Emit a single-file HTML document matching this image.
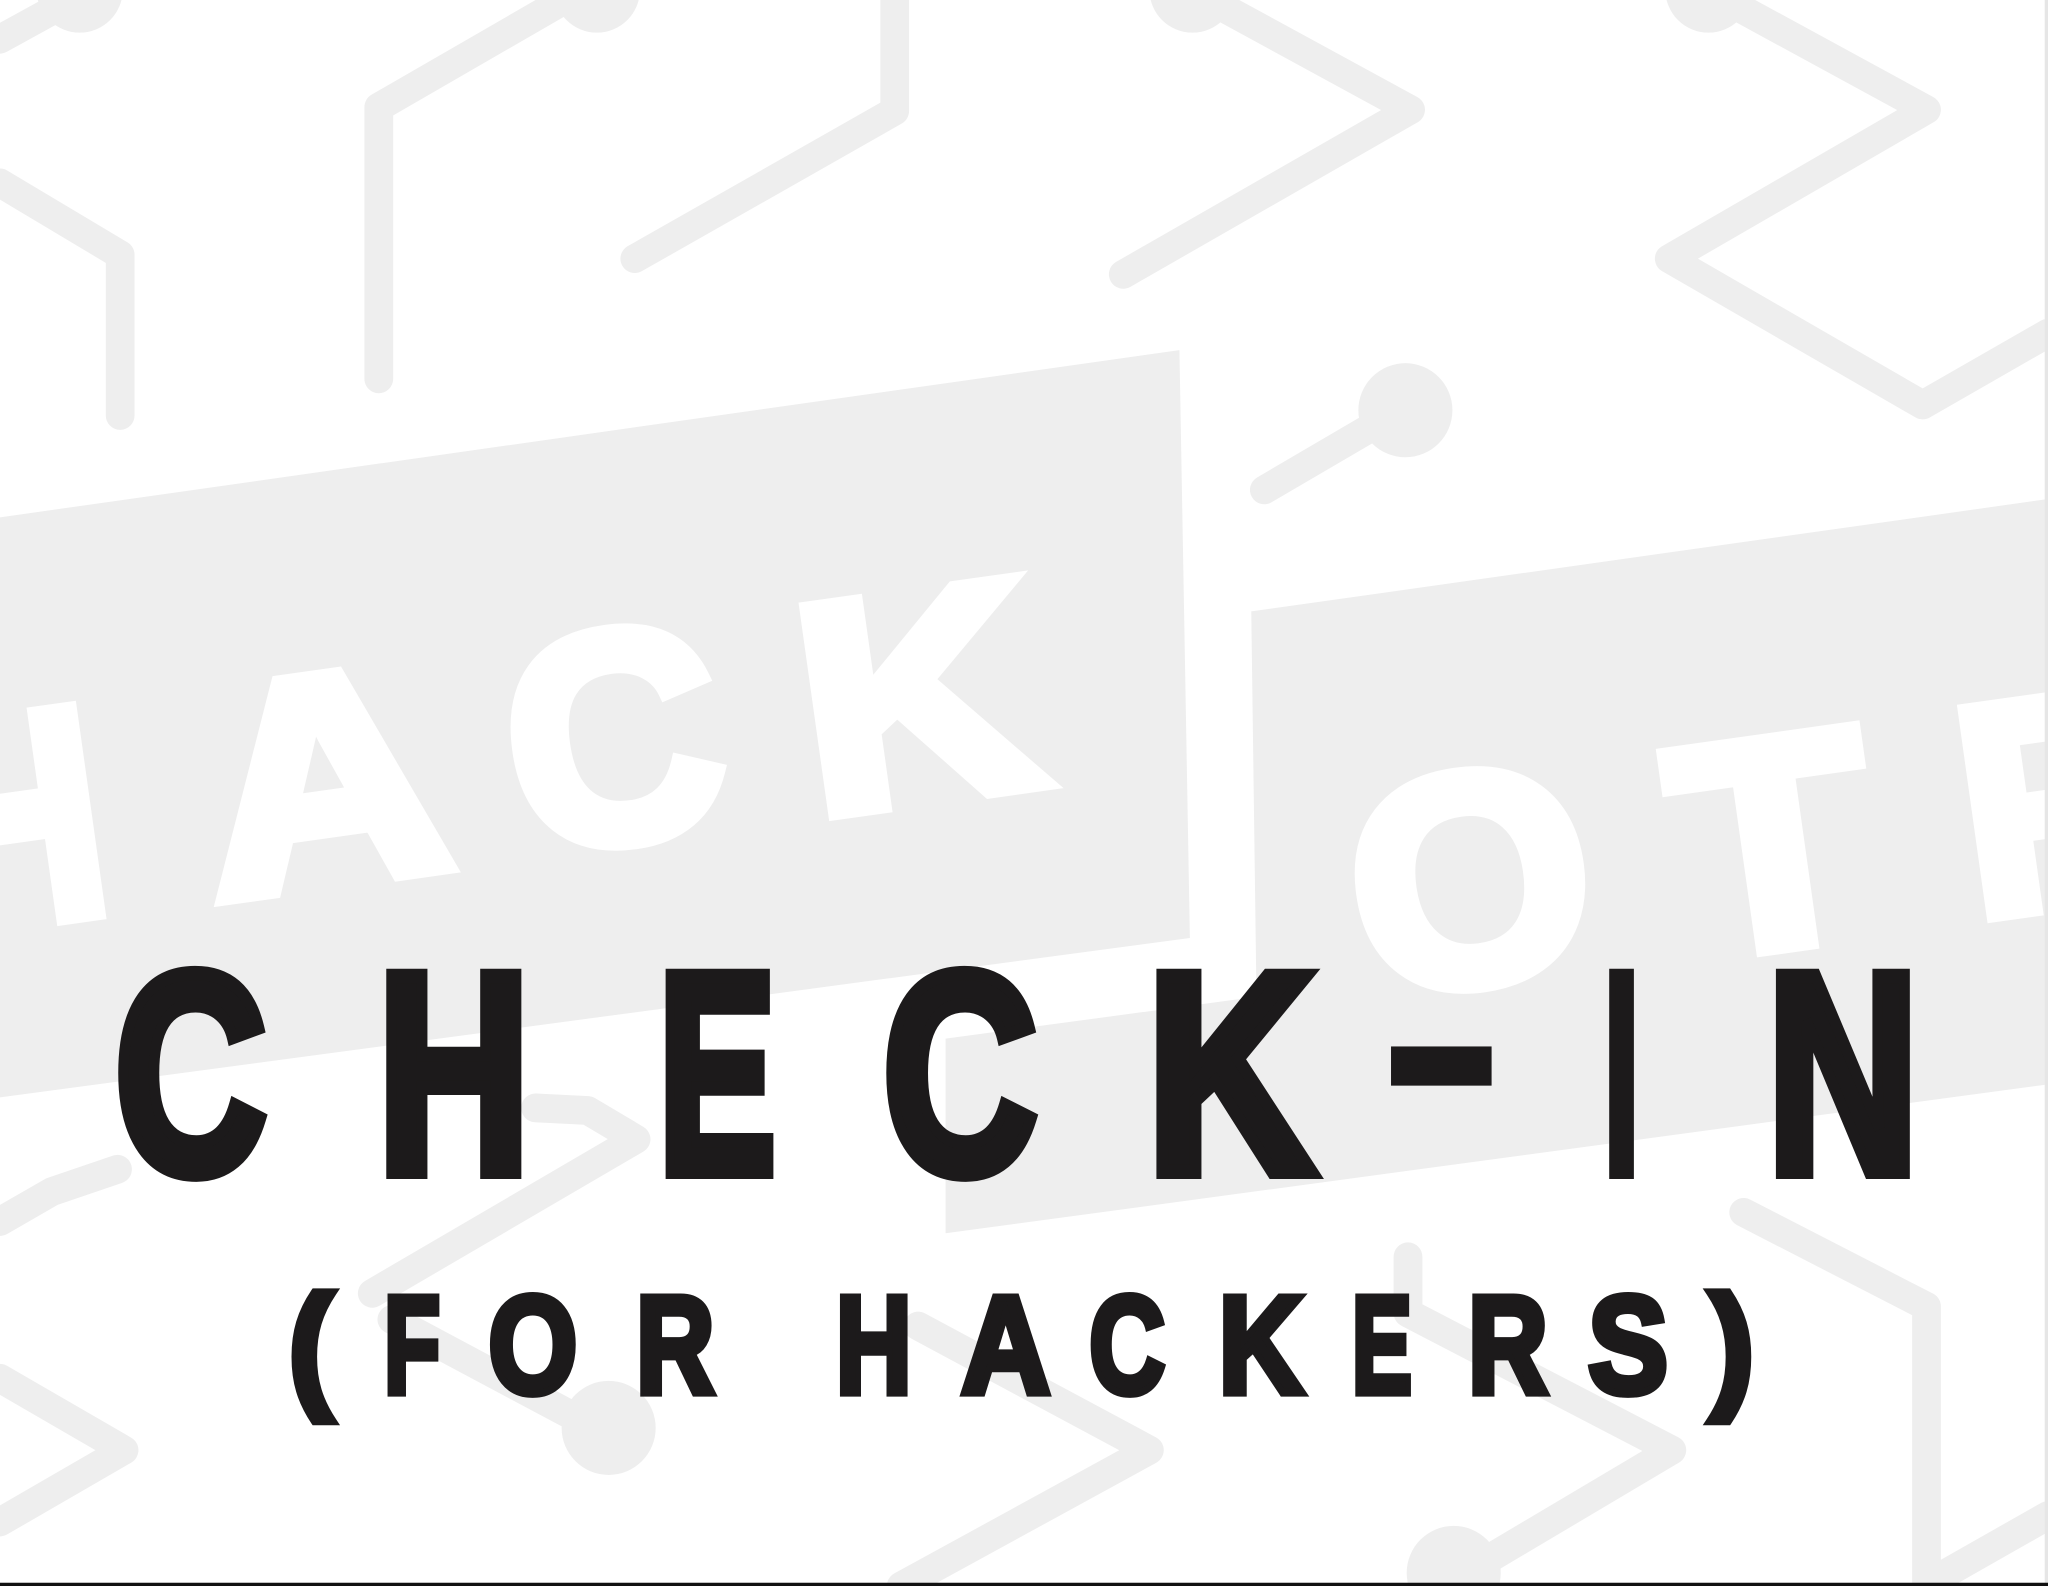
<!DOCTYPE html>
<html><head><meta charset="utf-8"><style>
html,body{margin:0;padding:0;background:#fff;}
svg{display:block;}
</style></head><body>
<svg width="2048" height="1586" viewBox="0 0 1568 1214" preserveAspectRatio="none" xmlns="http://www.w3.org/2000/svg">
<rect width="1568" height="1214" fill="#fff"/>
<g fill="none" stroke="#eeeeee" stroke-width="22" stroke-linejoin="round" stroke-linecap="round">
<polyline points="0,30 40,8"/>
<polyline points="0,140 92,195 92,318"/>
<polyline points="290,290 290,82 432,0"/>
<polyline points="486,198 685,85 685,0"/>
<polyline points="935,5 1080,84 860,210"/>
<polyline points="1330,5 1475,84 1278,198 1472,310 1568,255"/>
<polyline points="968,375 1050,327"/>
<polyline points="0,935 40,912 90,895"/>
<polyline points="0,1055 95,1110 0,1165"/>
<polyline points="410,848 450,850 487,872 285,990"/>
<polyline points="300,1010 450,1090"/>
<polyline points="703,1015 880,1110 690,1214"/>
<polyline points="1078,962 1078,1005 1280,1110 1120,1205"/>
<polyline points="1335,928 1475,1000 1475,1214"/>
<polyline points="1480,1210 1568,1160"/>
</g>
<g fill="#eeeeee">
<circle cx="61" cy="-8" r="33"/><circle cx="457" cy="-8" r="33"/><circle cx="913" cy="-8" r="33"/><circle cx="1308" cy="-8" r="33"/>
<circle cx="1076" cy="314" r="36"/>
<circle cx="466" cy="1093" r="36"/>
<circle cx="1113" cy="1204" r="36"/>
<polygon points="0,396 903,268 911,718 0,840"/>
<polygon points="958,468 1568,382 1568,830 724,944 724,795 962,763"/>
</g>
<g fill="#fff" stroke="#fff" stroke-width="12" stroke-linejoin="miter" font-family="Liberation Sans, sans-serif" font-weight="bold" font-size="228">
<text transform="translate(-50,716) rotate(-8)" textLength="140" lengthAdjust="spacingAndGlyphs">H</text>
<text transform="translate(166,688) rotate(-8)" textLength="185" lengthAdjust="spacingAndGlyphs">A</text>
<text transform="translate(400,654) rotate(-8)" textLength="163" lengthAdjust="spacingAndGlyphs">C</text>
<text transform="translate(624,624) rotate(-8)" textLength="180" lengthAdjust="spacingAndGlyphs">K</text>
<text transform="translate(1046,764) rotate(-8)" textLength="183" lengthAdjust="spacingAndGlyphs">O</text>
<text transform="translate(1294,734) rotate(-8)" textLength="150" lengthAdjust="spacingAndGlyphs">T</text>
<text transform="translate(1512,702) rotate(-8)" textLength="135" lengthAdjust="spacingAndGlyphs">F</text>
</g>
<g fill="#1c1a1b" stroke="#1c1a1b" stroke-width="11" font-family="Liberation Sans, sans-serif" font-weight="bold" font-size="218">
<text x="88" y="897" textLength="116" lengthAdjust="spacingAndGlyphs">C</text>
<text x="289" y="897" textLength="117" lengthAdjust="spacingAndGlyphs">H</text>
<text x="504" y="897" textLength="90" lengthAdjust="spacingAndGlyphs">E</text>
<text x="676" y="897" textLength="118" lengthAdjust="spacingAndGlyphs">C</text>
<text x="878" y="897" textLength="128" lengthAdjust="spacingAndGlyphs">K</text>
<text x="1228" y="897" textLength="27" lengthAdjust="spacingAndGlyphs">I</text>
<text x="1353" y="897" textLength="116" lengthAdjust="spacingAndGlyphs">N</text>
</g>
<rect x="1065" y="801" width="77" height="30" fill="#1c1a1b"/>
<g fill="#1c1a1b" stroke="#1c1a1b" stroke-width="6" font-family="Liberation Sans, sans-serif" font-weight="bold" font-size="106">
<text x="221" y="1066" textLength="34" lengthAdjust="spacingAndGlyphs">(</text>
<text x="294" y="1066" textLength="43" lengthAdjust="spacingAndGlyphs">F</text>
<text x="374" y="1066" textLength="68" lengthAdjust="spacingAndGlyphs">O</text>
<text x="487" y="1066" textLength="60" lengthAdjust="spacingAndGlyphs">R</text>
<text x="640" y="1066" textLength="58" lengthAdjust="spacingAndGlyphs">H</text>
<text x="736" y="1066" textLength="68" lengthAdjust="spacingAndGlyphs">A</text>
<text x="834" y="1066" textLength="58" lengthAdjust="spacingAndGlyphs">C</text>
<text x="933" y="1066" textLength="65" lengthAdjust="spacingAndGlyphs">K</text>
<text x="1035" y="1066" textLength="46" lengthAdjust="spacingAndGlyphs">E</text>
<text x="1124" y="1066" textLength="61" lengthAdjust="spacingAndGlyphs">R</text>
<text x="1216" y="1066" textLength="61" lengthAdjust="spacingAndGlyphs">S</text>
<text x="1309" y="1066" textLength="34" lengthAdjust="spacingAndGlyphs">)</text>
</g>
<rect x="1565.5" y="0" width="2.5" height="1214" fill="#e6e6e6"/>
<rect x="0" y="1211.5" width="1568" height="2.5" fill="#111"/>
</svg>
</body></html>
